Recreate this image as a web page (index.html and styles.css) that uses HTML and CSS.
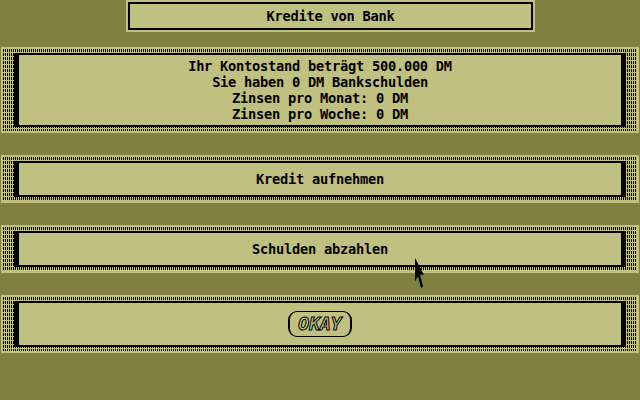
FILE: index.html
```html
<!DOCTYPE html>
<html lang="de">
<head>
<meta charset="utf-8">
<title>Kredite von Bank</title>
<link rel="stylesheet" href="styles.css">
</head>
<body>
<div class="screen">
  <div class="title-bar">
    <div class="title-inner">Kredite von Bank</div>
  </div>

  <div class="panel panel-info">
    <div class="frame">
      <div class="inner">
        <div class="line">Ihr Kontostand beträgt 500.000 DM</div>
        <div class="line">Sie haben 0 DM Bankschulden</div>
        <div class="line">Zinsen pro Monat: 0 DM</div>
        <div class="line">Zinsen pro Woche: 0 DM</div>
      </div>
    </div>
  </div>

  <div class="panel panel-action">
    <div class="frame">
      <div class="inner">Kredit aufnehmen</div>
    </div>
  </div>

  <div class="panel panel-action">
    <div class="frame">
      <div class="inner">Schulden abzahlen</div>
    </div>
  </div>

  <div class="panel panel-footer">
    <div class="frame">
      <div class="inner">
        <button class="okay" type="button">OKAY</button>
      </div>
    </div>
  </div>

  <svg class="pointer" width="11" height="30" viewBox="0 0 11 18" preserveAspectRatio="none">
    <polygon points="0,0 0,14 3,11 6,18 8,17 5,10 9,10" fill="#000"/>
  </svg>
</div>
</body>
</html>
```

FILE: styles.css
```css
html, body {
  margin: 0;
  padding: 0;
  background: #808040;
}

.screen {
  position: relative;
  width: 640px;
  height: 400px;
  display: flex;
  flex-direction: column;
  font-family: "DejaVu Sans Mono", "Liberation Mono", monospace;
  font-weight: bold;
  font-size: 13.7px;
  line-height: 16px;
  letter-spacing: -0.25px;
  color: #000;
}

/* window title */
.title-bar {
  width: 405px;
  margin: 0 0 15px 126px;
  padding: 2px;
  background: #c0c080;
}

.title-inner {
  height: 24px;
  border: 2px solid #000;
  background: #c0c080;
  display: flex;
  align-items: center;
  justify-content: center;
}

/* dialog panels with stippled bevel */
.panel {
  margin: 0 1px 22px 1px;
  padding: 2px;
  background: #c0c080;
}

.frame {
  padding: 4px 11px;
  background-color: #c0c080;
  background-image:
    repeating-linear-gradient(180deg, transparent 0 3px, #c0c080 3px 4px),
    repeating-linear-gradient(90deg, #000 0 1px, transparent 1px 2px);
}

.inner {
  border: 2px solid #000;
  border-left-width: 5px;
  border-right-width: 5px;
  background: #c0c080;
  display: flex;
  flex-direction: column;
  align-items: center;
  justify-content: center;
}

.panel-info .inner {
  height: 70px;
}

.line {
  height: 16px;
}

.panel-action .inner {
  height: 32px;
}

.panel-footer .inner {
  height: 42px;
}

.okay {
  width: 64px;
  height: 26px;
  margin-top: -1px;
  padding: 0;
  border: 1px solid #000;
  border-left-width: 2px;
  border-right-width: 2px;
  border-radius: 9px;
  background: #c0c080;
  font-family: "DejaVu Sans Mono", "Liberation Mono", monospace;
  font-size: 18px;
  font-style: italic;
  font-weight: bold;
  letter-spacing: 0;
  color: #c0c080;
  -webkit-text-stroke: 1px #000;
}

/* mouse pointer above the dialog */
.pointer {
  position: absolute;
  left: 415px;
  top: 258px;
}
```
